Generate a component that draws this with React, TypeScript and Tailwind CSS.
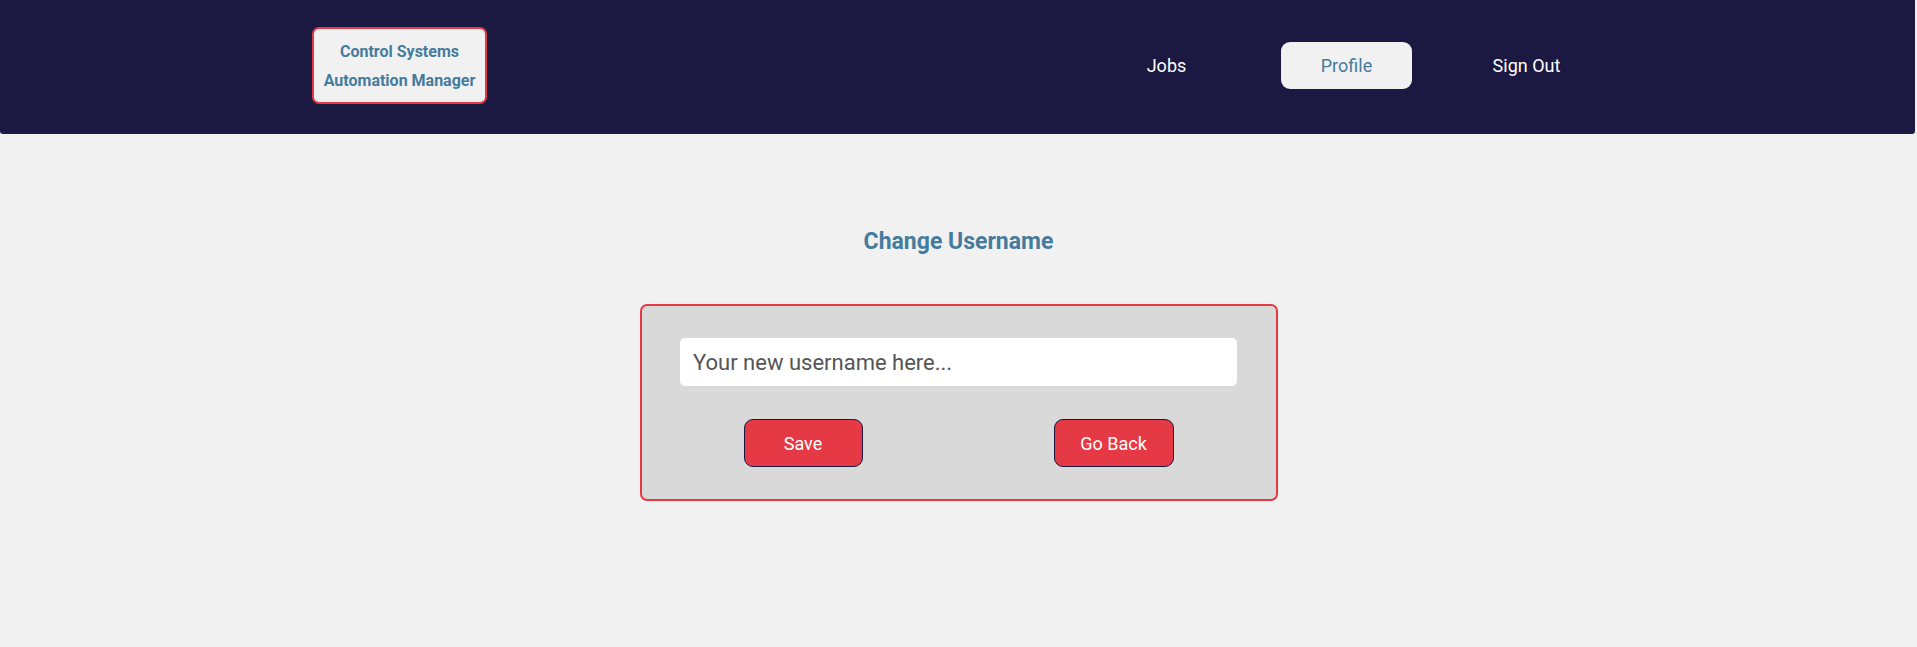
import React, { useState } from 'react';

const navLinks = ['Jobs', 'Profile', 'Sign Out'];

const App: React.FC = () => {
  const [username, setUsername] = useState('');
  const active = 'Profile';

  return (
    <div className="min-h-[647px] bg-[#f1f1f1] font-['Roboto',sans-serif]">
      <header className="h-[134px] bg-[#1b1941] rounded-b-[3px] mr-[2px] flex items-start pl-[312px] pr-[323px] justify-between">
        <div className="mt-[27px] w-[175px] h-[77px] rounded-[7px] border-2 border-[#e63946] bg-[#f1f1f1] flex flex-col items-center justify-center text-[#457b9d] text-[16px] font-bold leading-[29px]">
          <span>Control Systems</span>
          <span>Automation Manager</span>
        </div>
        <nav className="mt-[42px] flex gap-[49px]">
          {navLinks.map(link => (
            <button
              key={link}
              className={`w-[131px] h-[47px] rounded-[9px] text-[18px] flex items-center justify-center ${
                link === active ? 'bg-[#f1f1f1] text-[#457b9d]' : 'text-white'
              }`}
            >
              {link}
            </button>
          ))}
        </nav>
      </header>

      <main className="flex flex-col items-center">
        <h2 className="mt-[94px] text-[23px] font-bold text-[#457b9d] leading-[27px]">Change Username</h2>
        <div className="mt-[49px] w-[638px] h-[197px] rounded-[7px] border-2 border-[#e63946] bg-[#d9d9d9] flex flex-col items-center">
          <input
            type="text"
            value={username}
            onChange={e => setUsername(e.target.value)}
            placeholder="Your new username here..."
            className="mt-[32px] w-[557px] h-[48px] rounded-[5px] bg-white px-[13px] text-[22px] text-[#333] placeholder:text-[#555] outline-none"
          />
          <div className="mt-[33px] flex gap-[191px]">
            <button className="w-[119px] h-[48px] rounded-[9px] border border-[#1b1941] bg-[#e63946] text-white text-[18px]">
              Save
            </button>
            <button className="w-[120px] h-[48px] rounded-[9px] border border-[#1b1941] bg-[#e63946] text-white text-[18px]">
              Go Back
            </button>
          </div>
        </div>
      </main>
    </div>
  );
};

export default App;
